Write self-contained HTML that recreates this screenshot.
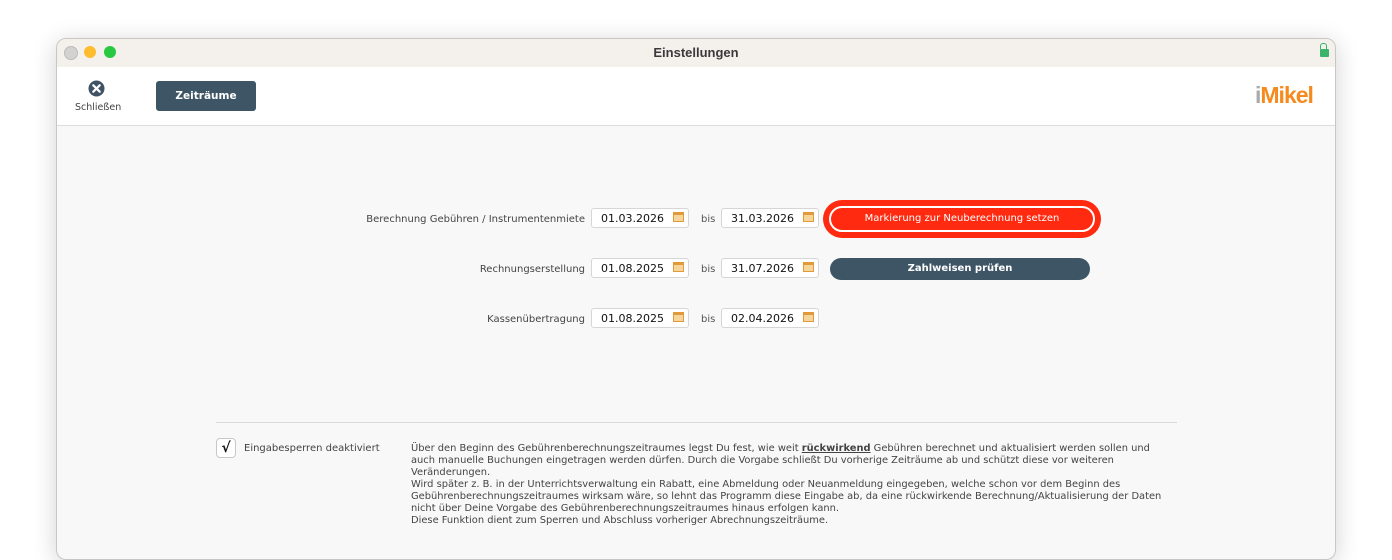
<!DOCTYPE html>
<html><head><meta charset="utf-8"><style>
body{margin:0;width:1392px;height:531px;background:#fff;position:relative;overflow:hidden;font-family:"DejaVu Sans","Liberation Sans",sans-serif;}
.win{position:absolute;left:56px;top:38px;width:1278px;height:520px;border:1px solid #c9c7c4;border-radius:10px;overflow:hidden;box-shadow:0 4px 24px rgba(0,0,0,.18);background:#f8f8f8;}
.tb{position:absolute;left:0;top:0;width:100%;height:28px;background:#f4f1ed;border-bottom:1px solid #dcdad7;text-align:center;font:bold 13px/28px "Liberation Sans",sans-serif;color:#3a3a3a;}
.dot{position:absolute;top:7px;width:12px;height:12px;border-radius:50%;}
.tool{position:absolute;left:0;top:28px;width:100%;height:58px;background:#fff;border-bottom:1px solid #dcdcdc;}
.abs{position:absolute;}
.lbl{position:absolute;font-size:10px;color:#444;text-align:right;}
.inp{position:absolute;width:98px;height:20px;background:#fff;border:1px solid #d6d6d6;border-radius:3px;box-sizing:border-box;font-size:11px;color:#111;line-height:20px;padding-left:9px;}
.cal{position:absolute;right:4px;top:3px;width:11px;height:10px;background:#f6d59a;border:1px solid #e09a3a;box-sizing:border-box;}
.cal:before{content:"";position:absolute;left:0;top:0;right:0;height:2px;background:#e09a3a;}
.bis{position:absolute;font-size:10px;color:#555;}
.desc{position:absolute;left:354px;top:404px;width:762px;font-size:9.9px;line-height:12px;color:#444;}
</style></head><body>
<div class="win">
 <div class="tb">Einstellungen
  <div class="dot" style="left:7px;background:#d3d2d1;border:0.5px solid #bbb"></div>
  <div class="dot" style="left:27px;background:#febc2e"></div>
  <div class="dot" style="left:47px;background:#28c840"></div>
  <div class="abs" style="right:6px;top:10px;width:9px;height:8px;background:#3bb36a;border-radius:1px"></div>
  <div class="abs" style="right:8px;top:4px;width:5px;height:5px;border:1.5px solid #3bb36a;border-bottom:0;border-radius:3px 3px 0 0"></div>
 </div>
 <div class="tool">
  <svg class="abs" style="left:31px;top:13px" width="17" height="17" viewBox="0 0 17 17"><circle cx="8.5" cy="8.5" r="8" fill="#3f5364"/><path d="M5.3 5.3L11.7 11.7M11.7 5.3L5.3 11.7" stroke="#fff" stroke-width="2.2" stroke-linecap="round"/></svg>
  <div class="abs" style="left:18px;top:35px;font-size:9.5px;color:#444">Schließen</div>
  <div class="abs" style="left:99px;top:14px;width:100px;height:30px;background:#3e5566;border-radius:3px;color:#fff;font-size:10.5px;font-weight:bold;text-align:center;line-height:30px">Zeiträume</div>
  <div class="abs" style="left:1198px;top:15px;font:bold 23px 'Liberation Sans',sans-serif;letter-spacing:-1px"><span style="color:#aaa">i</span><span style="color:#f58b1f">Mikel</span></div>
 </div>
 <div class="lbl" style="right:750px;top:175px">Berechnung Gebühren / Instrumentenmiete</div>
 <div class="lbl" style="right:750px;top:225px">Rechnungserstellung</div>
 <div class="lbl" style="right:750px;top:275px">Kassenübertragung</div>
 <div class="inp" style="left:534px;top:169px">01.03.2026<div class="cal"></div></div>
 <div class="inp" style="left:664px;top:169px">31.03.2026<div class="cal"></div></div>
 <div class="inp" style="left:534px;top:219px">01.08.2025<div class="cal"></div></div>
 <div class="inp" style="left:664px;top:219px">31.07.2026<div class="cal"></div></div>
 <div class="inp" style="left:534px;top:269px">01.08.2025<div class="cal"></div></div>
 <div class="inp" style="left:664px;top:269px">02.04.2026<div class="cal"></div></div>
 <div class="bis" style="left:644px;top:175px">bis</div>
 <div class="bis" style="left:644px;top:225px">bis</div>
 <div class="bis" style="left:644px;top:275px">bis</div>
 <div class="abs" style="left:766px;top:161px;width:278px;height:38px;background:#ff2a10;border-radius:19px"></div>
 <div class="abs" style="left:772px;top:167px;width:266px;height:26px;border:2px solid #fff;box-sizing:border-box;border-radius:13px;background:#ff2a10;color:#fff;font-size:10px;text-align:center;line-height:22px">Markierung zur Neuberechnung setzen</div>
 <div class="abs" style="left:773px;top:219px;width:260px;height:22px;background:#3e5566;border-radius:11px;color:#fff;font-size:10px;font-weight:bold;text-align:center;line-height:22px">Zahlweisen prüfen</div>
 <div class="abs" style="left:159px;top:383px;width:961px;height:1px;background:#d8d8d8"></div>
 <div class="abs" style="left:159px;top:399px;width:20px;height:20px;background:#fff;border:1px solid #c8c8c8;border-radius:4px;box-sizing:border-box;text-align:center;line-height:18px;font-size:14px;font-weight:bold;color:#111">√</div>
 <div class="abs" style="left:187px;top:404px;font-size:10px;color:#444">Eingabesperren deaktiviert</div>
 <div class="desc">Über den Beginn des Gebührenberechnungszeitraumes legst Du fest, wie weit <b><u>rückwirkend</u></b> Gebühren berechnet und aktualisiert werden sollen und<br>auch manuelle Buchungen eingetragen werden dürfen. Durch die Vorgabe schließt Du vorherige Zeiträume ab und schützt diese vor weiteren<br>Veränderungen.<br>Wird später z. B. in der Unterrichtsverwaltung ein Rabatt, eine Abmeldung oder Neuanmeldung eingegeben, welche schon vor dem Beginn des<br>Gebührenberechnungszeitraumes wirksam wäre, so lehnt das Programm diese Eingabe ab, da eine rückwirkende Berechnung/Aktualisierung der Daten<br>nicht über Deine Vorgabe des Gebührenberechnungszeitraumes hinaus erfolgen kann.<br>Diese Funktion dient zum Sperren und Abschluss vorheriger Abrechnungszeiträume.</div>
</div>
</body></html>
